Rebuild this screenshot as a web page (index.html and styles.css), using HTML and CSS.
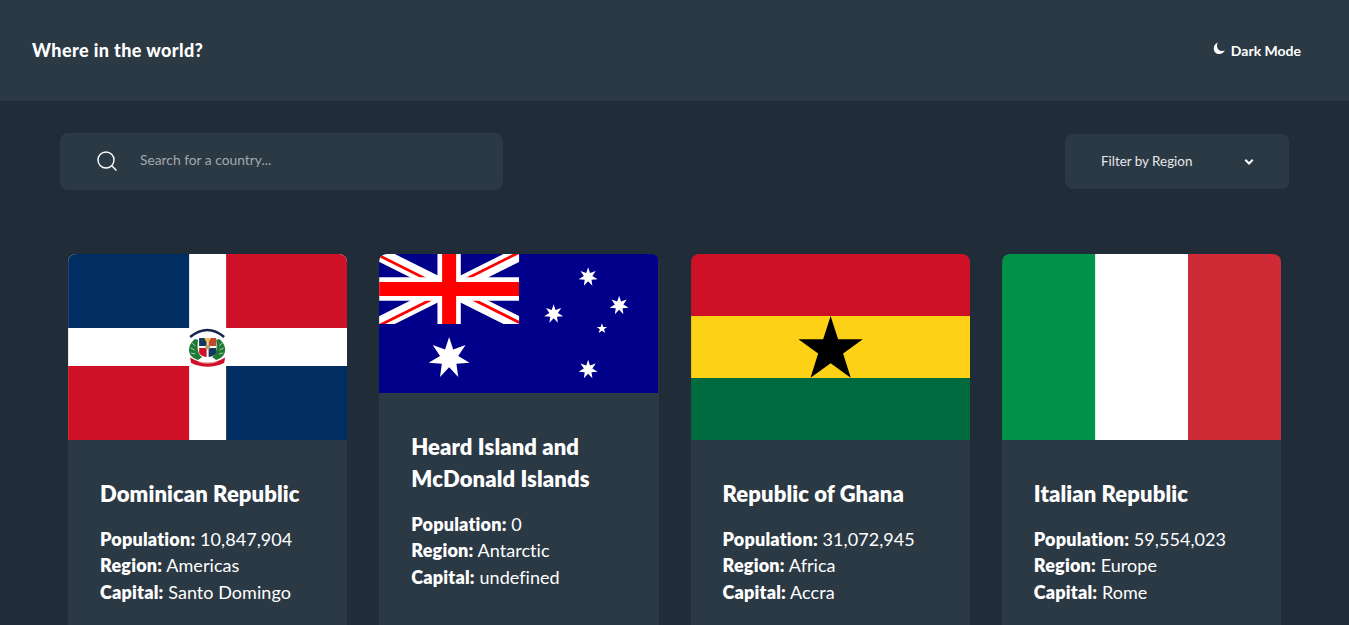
FILE: index.html
```html
<!DOCTYPE html>
<html>
<head>
  <title>Where in the world?</title>
  <link rel="stylesheet" href="styles.css">
</head>
<body>
  <header class="topbar">
    <h1 class="brand">Where in the world?</h1>
    <button class="theme-toggle">
      <svg class="moon" viewBox="0 0 14 14"><path d="M5.200.6C3 4.600 5.200 9.600 9.400 9.800c1.300.1 2.400-.2 3.400-.8C11.700 11.500 9.400 13 6.900 13 3.400 13 .8 10.200.8 6.900.8 4 2.600 1.500 5.200.6z"/></svg>
      <span>Dark Mode</span>
    </button>
  </header>

  <main class="content">
    <div class="controls">
      <label class="search">
        <svg class="search-icon" viewBox="0 0 20 20"><circle cx="9" cy="9" r="8"/><path d="M14.800 14.800 19.500 19.500"/></svg>
        <input class="search-input" type="text" placeholder="Search for a country...">
      </label>
      <div class="filter">
        <span class="filter-label">Filter by Region</span>
        <svg class="chevron" viewBox="0 0 10 8"><path d="M1.300 1.800 5 5.500 8.700 1.800"/></svg>
      </div>
    </div>

    <section class="grid">
      <article class="card">
        <svg class="flag" viewBox="0 0 279 186">
          <rect width="279" height="186" fill="#fff"/>
          <rect width="121" height="74" fill="#002d62"/>
          <rect x="158" width="121" height="74" fill="#ce1126"/>
          <rect y="112" width="121" height="74" fill="#ce1126"/>
          <rect x="158" y="112" width="121" height="74" fill="#002d62"/>
          <!-- coat of arms -->
          <path d="M122 83Q139.500 69 156 83" fill="none" stroke="#14284f" stroke-width="2.500"/>
          <path d="M127 85C118 92 119 103 130 106L134 103C129 100 129 92 130 86z" fill="#1f7a35"/>
          <path d="M151 85C160 92 159 103 148 106L144 103C149 100 149 92 148 86z" fill="#1f7a35"/>
          <path d="M124 89l3 3M122.500 94l4 2M123 99l4 1M154 89l-3 3M155.500 94l-4 2M155 99l-4 1" stroke="#cfe3c8" stroke-width=".8"/>
          <rect x="131" y="84" width="7.500" height="8" fill="#14365f"/>
          <rect x="140.500" y="84" width="7.500" height="8" fill="#c2482c"/>
          <path d="M131 94h7.500v9q-5.500-.5-7.500-4z" fill="#ce1126"/>
          <path d="M140.500 94h7.500v5q-2 3.500-7.500 4z" fill="#14365f"/>
          <path d="M136 84h7l-3.500 6z" fill="#e8c15a"/>
          <circle cx="139.500" cy="93" r="2.500" fill="#b9a26a"/>
          <path d="M122 103.500Q139.500 114 157 103.500L156 109Q139.500 116.500 123 109z" fill="#ce1126"/>
          <path d="M130 107.500Q139.500 111 149 107.500" fill="none" stroke="#f3c9c9" stroke-width=".7"/>
        </svg>
        <div class="card-body">
          <h2 class="card-title">Dominican Republic</h2>
          <p class="fact"><b>Population:</b> 10,847,904</p>
          <p class="fact"><b>Region:</b> Americas</p>
          <p class="fact"><b>Capital:</b> Santo Domingo</p>
        </div>
      </article>

      <article class="card">
        <svg class="flag flag-short" viewBox="0 0 279 139">
          <defs>
            <polygon id="star7" points="0,-1 .1928,-.4004 .7818,-.6235 .4333,-.0989 .9749,.2225 .3475,.2771 .4339,.901 0,.4444 -.4339,.901 -.3475,.2771 -.9749,.2225 -.4333,-.0989 -.7818,-.6235 -.1928,-.4004" fill="#fff"/>
            <clipPath id="jack-clip"><rect width="60" height="30"/></clipPath>
            <clipPath id="jack-red"><path d="M30 15h30v15zv15H0zH0V0zV0h30z"/></clipPath>
          </defs>
          <rect width="279" height="139" fill="#00008b"/>
          <g transform="scale(2.333)" clip-path="url(#jack-clip)" fill="none">
            <path d="M0 0 60 30M60 0 0 30" stroke="#fff" stroke-width="6"/>
            <path d="M0 0 60 30M60 0 0 30" stroke="#f00" stroke-width="2.400" clip-path="url(#jack-red)"/>
            <path d="M30 0v30M0 15h60" stroke="#fff" stroke-width="10"/>
            <path d="M30 0v30M0 15h60" stroke="#f00" stroke-width="6"/>
          </g>
          <use href="#star7" transform="translate(70 104) scale(21)"/>
          <use href="#star7" transform="translate(209 23) scale(9.800)"/>
          <use href="#star7" transform="translate(240 51.500) scale(9.800)"/>
          <use href="#star7" transform="translate(174.500 60) scale(9.800)"/>
          <use href="#star7" transform="translate(209 115.500) scale(9.800)"/>
          <polygon points="222.800,69.200 224.100,73 228,73 224.900,75.300 226.100,79.100 222.800,76.800 219.500,79.100 220.700,75.300 217.600,73 221.500,73" fill="#fff"/>
        </svg>
        <div class="card-body">
          <h2 class="card-title">Heard Island and McDonald Islands</h2>
          <p class="fact"><b>Population:</b> 0</p>
          <p class="fact"><b>Region:</b> Antarctic</p>
          <p class="fact"><b>Capital:</b> undefined</p>
        </div>
      </article>

      <article class="card">
        <svg class="flag" viewBox="0 0 279 186">
          <rect width="279" height="62" fill="#ce1126"/>
          <rect y="62" width="279" height="62" fill="#fcd116"/>
          <rect y="124" width="279" height="62" fill="#006b3f"/>
          <polygon points="139.500,62 147,85.300 171.700,85.300 152,99.500 159.600,123.700 139.500,109.300 119.400,123.700 127,99.500 107.300,85.300 132,85.300"/>
        </svg>
        <div class="card-body">
          <h2 class="card-title">Republic of Ghana</h2>
          <p class="fact"><b>Population:</b> 31,072,945</p>
          <p class="fact"><b>Region:</b> Africa</p>
          <p class="fact"><b>Capital:</b> Accra</p>
        </div>
      </article>

      <article class="card">
        <svg class="flag" viewBox="0 0 279 186">
          <rect width="93" height="186" fill="#009246"/>
          <rect x="93" width="93" height="186" fill="#fff"/>
          <rect x="186" width="93" height="186" fill="#ce2b37"/>
        </svg>
        <div class="card-body">
          <h2 class="card-title">Italian Republic</h2>
          <p class="fact"><b>Population:</b> 59,554,023</p>
          <p class="fact"><b>Region:</b> Europe</p>
          <p class="fact"><b>Capital:</b> Rome</p>
        </div>
      </article>
    </section>
  </main>
</body>
</html>
```

FILE: styles.css
```css
* {
  box-sizing: border-box;
}

html, body {
  height: 100%;
  overflow: hidden;
}

body {
  margin: 0;
  background-color: #202c37;
  color: #fff;
  font-family: "Lato", "Open Sans", sans-serif;
}

.topbar {
  display: flex;
  justify-content: space-between;
  align-items: center;
  height: 101px;
  padding: 0 48px 0 32px;
  background-color: #2b3945;
}

.brand {
  margin: 0 0 1px;
  font-size: 18px;
  font-weight: 900;
  letter-spacing: .4px;
}

.theme-toggle {
  display: flex;
  align-items: center;
  gap: 5px;
  padding: 0;
  border: none;
  background: none;
  color: #fff;
  font-family: inherit;
  font-size: 14px;
  font-weight: 700;
}

.moon {
  width: 13px;
  height: 13px;
  margin-top: -4px;
  fill: #fff;
}

.content {
  padding: 32px 60px 0;
}

.controls {
  display: flex;
  justify-content: space-between;
  align-items: center;
}

.search {
  display: flex;
  align-items: center;
  gap: 21px;
  width: 443px;
  height: 57px;
  padding-left: 37px;
  border-radius: 8px;
  background-color: #2b3945;
}

.search-icon {
  width: 20px;
  height: 20px;
  margin-top: -1px;
  fill: none;
  stroke: #fff;
  stroke-width: 1.400;
}

.search-input {
  flex: 1;
  padding: 0 0 4px 2px;
  border: none;
  outline: none;
  background: none;
  color: #fff;
  font-family: inherit;
  font-size: 13.800px;
}

.search-input::placeholder {
  color: #a2a8ae;
  opacity: 1;
}

.filter {
  display: flex;
  justify-content: space-between;
  align-items: center;
  width: 224px;
  height: 55px;
  padding: 0 35px 0 36px;
  border-radius: 8px;
  background-color: #2b3945;
  font-size: 13.400px;
  color: #e6e8ea;
}

.filter-label {
  margin-bottom: 2px;
}

.chevron {
  width: 10px;
  height: 8px;
  fill: none;
  stroke: #fff;
  stroke-width: 2;
}

.grid {
  display: grid;
  grid-template-columns: repeat(4, 1fr);
  gap: 32px;
  margin: 64px 8px 0;
}

.card {
  overflow: hidden;
  border-radius: 8px;
  background-color: #2b3945;
}

.flag {
  display: block;
  width: 100%;
  height: 186px;
}

.flag-short {
  height: 139px;
}

.card-body {
  padding: 38px 32px 40px;
}

.card-title {
  margin: 0 0 16px;
  font-size: 22px;
  font-weight: 800;
  line-height: 32px;
  letter-spacing: .1px;
}

.fact {
  margin: 0;
  font-size: 18px;
  font-weight: 400;
  line-height: 26.300px;
  letter-spacing: .05px;
}

.fact b {
  font-weight: 800;
  letter-spacing: .2px;
}
```
